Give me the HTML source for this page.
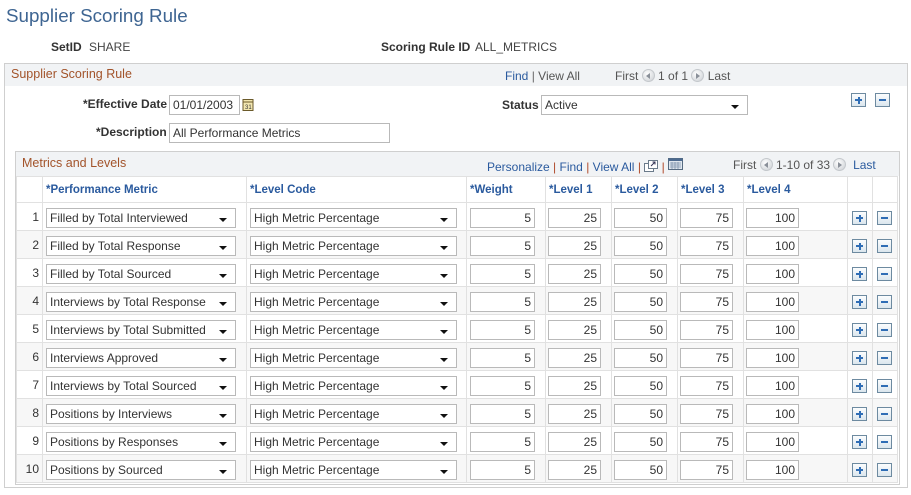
<!DOCTYPE html>
<html><head><meta charset="utf-8">
<style>
*{box-sizing:border-box;margin:0;padding:0}
body{width:911px;height:495px;background:#fff;font-family:"Liberation Sans",Arial,sans-serif;font-size:12px;color:#333;position:relative;overflow:hidden}
.a{position:absolute;white-space:nowrap}
.lbl{font-weight:bold;color:#333}
.val{color:#444}
.lnk{color:#2a5a9e}
.sep{color:#b04a2a}
.sec{color:#a2532a;font-size:12.5px}
.inp{position:absolute;height:20px;border:1px solid #b9b9b9;background:#fff;color:#333;padding:2px 3px 0 3px;font-size:12px;line-height:15px;white-space:nowrap;overflow:hidden}
.sel::after{content:"";position:absolute;right:8px;top:9px;border-left:4px solid transparent;border-right:4px solid transparent;border-top:4px solid #111}
.btn{position:absolute;width:15px;height:14px;border:1px solid #6d8aa0;background:linear-gradient(#fbfdfe,#dbe6ee)}
.btn.p::before{content:"";position:absolute;left:3px;top:5px;width:7px;height:2px;background:#2f6db5}
.btn.p::after{content:"";position:absolute;left:5.5px;top:2.5px;width:2px;height:7px;background:#2f6db5}
.btn.m::before{content:"";position:absolute;left:3px;top:5px;width:7px;height:2px;background:#2f6db5}
.circ{display:inline-block;width:13px;height:13px;border-radius:50%;background:radial-gradient(circle at 40% 35%,#fff,#c9cdd2);border:1px solid #c4c8cc;vertical-align:-2px;position:relative}
.circ.l::after{content:"";position:absolute;left:3px;top:3px;border-top:3px solid transparent;border-bottom:3px solid transparent;border-right:4px solid #8a9099}
.circ.r::after{content:"";position:absolute;left:4px;top:3px;border-top:3px solid transparent;border-bottom:3px solid transparent;border-left:4px solid #8a9099}
table{position:absolute;left:16px;top:176px;border-collapse:collapse;table-layout:fixed}
td{border:1px solid #e1e1e1;height:28px;position:relative;padding:0}
tr.h td{height:26px;color:#2a5a9e;font-weight:bold;font-size:11.5px;padding-left:3px;vertical-align:middle}
tr.g td{background:#f7f7f7}
td.n{text-align:right;padding-right:3px;color:#333;padding-top:1px}
td .inp{position:absolute;top:5px}
td .btn{top:8px !important}
.r{text-align:right}
</style></head><body>
<div class="a" style="left:6px;top:5px;font-size:18.8px;color:#3e6592">Supplier Scoring Rule</div>
<div class="a lbl" style="left:51px;top:40px">SetID</div>
<div class="a val" style="left:89px;top:40px">SHARE</div>
<div class="a lbl" style="left:381px;top:40px">Scoring Rule ID</div>
<div class="a val" style="left:475px;top:40px">ALL_METRICS</div>

<div class="a" style="left:4px;top:63px;width:904px;height:425px;border:1px solid #cfcfcf;background:#fff"></div>
<div class="a" style="left:5px;top:64px;width:902px;height:22px;background:#f1f3f5"></div>
<div class="a sec" style="left:11px;top:67px">Supplier Scoring Rule</div>
<div class="a" style="left:505px;top:69px"><span class="lnk">Find</span> <span style="color:#666">|</span> <span class="lnk" style="color:#555">View All</span></div>
<div class="a" style="left:615px;top:69px;color:#555">First <span class="circ l"></span> 1 of 1 <span class="circ r"></span> Last</div>

<div class="a lbl" style="left:83px;top:97px">*Effective Date</div>
<div class="inp" style="left:169px;top:95px;width:71px">01/01/2003</div>
<svg class="a" style="left:242px;top:98px" width="13" height="14" viewBox="0 0 13 14"><rect x="1" y="1.5" width="10" height="11" fill="#f3e7b0" stroke="#6b5a2a"/><line x1="1" y1="4" x2="11" y2="4" stroke="#6b5a2a"/><text x="3" y="11" font-size="6" font-family="Liberation Sans" fill="#333">31</text></svg>
<div class="a lbl" style="left:96px;top:125px">*Description</div>
<div class="inp" style="left:169px;top:123px;width:221px">All Performance Metrics</div>
<div class="a lbl" style="left:502px;top:98px">Status</div>
<div class="inp sel" style="left:541px;top:95px;width:207px">Active</div>
<div class="btn p" style="left:851px;top:93px"></div>
<div class="btn m" style="left:875px;top:93px"></div>

<div class="a" style="left:15px;top:151px;width:885px;height:334px;border:1px solid #cfcfcf"></div>
<div class="a" style="left:16px;top:152px;width:883px;height:24px;background:#f1f3f5"></div>
<div class="a sec" style="left:22px;top:156px">Metrics and Levels</div>
<div class="a" style="left:487px;top:158px"><span class="lnk">Personalize</span> <span class="sep">|</span> <span class="lnk">Find</span> <span class="sep">|</span> <span class="lnk">View All</span> <span class="sep">|</span> <svg width="14" height="12" style="vertical-align:-1px" viewBox="0 0 14 12"><rect x="0.5" y="3.5" width="9" height="8" fill="#fff" stroke="#6a7a8a"/><rect x="4.5" y="0.5" width="9" height="8" fill="#fff" stroke="#6a7a8a"/><path d="M7 6 L11 2 M8.5 2 H11 V4.5" stroke="#335" fill="none"/></svg> <span class="sep">|</span> <svg width="15" height="12" style="vertical-align:1px" viewBox="0 0 15 12"><rect x="0.5" y="0.5" width="14" height="11" fill="#dfe6ee" stroke="#556a80"/><rect x="0.5" y="0.5" width="14" height="2.5" fill="#4c6a8f"/><path d="M2 5h11M2 7h11M2 9h11M4 4v7M7 4v7M10 4v7" stroke="#7e94ad" stroke-width="0.8"/></svg></div>
<div class="a" style="left:733px;top:158px;color:#555">First <span class="circ l"></span> 1-10 of 33 <span class="circ r"></span> <span class="lnk">&nbsp;Last</span></div>

<table>
<colgroup><col style="width:26px"><col style="width:204px"><col style="width:220px"><col style="width:79px"><col style="width:66px"><col style="width:66px"><col style="width:66px"><col style="width:104px"><col style="width:25px"><col style="width:25px"></colgroup>
<tr class="h"><td></td><td>*Performance Metric</td><td>*Level Code</td><td>*Weight</td><td>*Level 1</td><td>*Level 2</td><td>*Level 3</td><td>*Level 4</td><td></td><td></td></tr>
<tr><td class="n">1</td><td><div class="inp sel" style="left:3px;width:190px">Filled by Total Interviewed</div></td><td><div class="inp sel" style="left:3px;width:207px">High Metric Percentage</div></td><td><div class="inp r" style="left:3px;width:65px">5</div></td><td><div class="inp r" style="left:2px;width:53px">25</div></td><td><div class="inp r" style="left:2px;width:53px">50</div></td><td><div class="inp r" style="left:2px;width:53px">75</div></td><td><div class="inp r" style="left:2px;width:53px">100</div></td><td><div class="btn p" style="left:4px"></div></td><td><div class="btn m" style="left:4px"></div></td></tr>
<tr class="g"><td class="n">2</td><td><div class="inp sel" style="left:3px;width:190px">Filled by Total Response</div></td><td><div class="inp sel" style="left:3px;width:207px">High Metric Percentage</div></td><td><div class="inp r" style="left:3px;width:65px">5</div></td><td><div class="inp r" style="left:2px;width:53px">25</div></td><td><div class="inp r" style="left:2px;width:53px">50</div></td><td><div class="inp r" style="left:2px;width:53px">75</div></td><td><div class="inp r" style="left:2px;width:53px">100</div></td><td><div class="btn p" style="left:4px"></div></td><td><div class="btn m" style="left:4px"></div></td></tr>
<tr><td class="n">3</td><td><div class="inp sel" style="left:3px;width:190px">Filled by Total Sourced</div></td><td><div class="inp sel" style="left:3px;width:207px">High Metric Percentage</div></td><td><div class="inp r" style="left:3px;width:65px">5</div></td><td><div class="inp r" style="left:2px;width:53px">25</div></td><td><div class="inp r" style="left:2px;width:53px">50</div></td><td><div class="inp r" style="left:2px;width:53px">75</div></td><td><div class="inp r" style="left:2px;width:53px">100</div></td><td><div class="btn p" style="left:4px"></div></td><td><div class="btn m" style="left:4px"></div></td></tr>
<tr class="g"><td class="n">4</td><td><div class="inp sel" style="left:3px;width:190px">Interviews by Total Response</div></td><td><div class="inp sel" style="left:3px;width:207px">High Metric Percentage</div></td><td><div class="inp r" style="left:3px;width:65px">5</div></td><td><div class="inp r" style="left:2px;width:53px">25</div></td><td><div class="inp r" style="left:2px;width:53px">50</div></td><td><div class="inp r" style="left:2px;width:53px">75</div></td><td><div class="inp r" style="left:2px;width:53px">100</div></td><td><div class="btn p" style="left:4px"></div></td><td><div class="btn m" style="left:4px"></div></td></tr>
<tr><td class="n">5</td><td><div class="inp sel" style="left:3px;width:190px">Interviews by Total Submitted</div></td><td><div class="inp sel" style="left:3px;width:207px">High Metric Percentage</div></td><td><div class="inp r" style="left:3px;width:65px">5</div></td><td><div class="inp r" style="left:2px;width:53px">25</div></td><td><div class="inp r" style="left:2px;width:53px">50</div></td><td><div class="inp r" style="left:2px;width:53px">75</div></td><td><div class="inp r" style="left:2px;width:53px">100</div></td><td><div class="btn p" style="left:4px"></div></td><td><div class="btn m" style="left:4px"></div></td></tr>
<tr class="g"><td class="n">6</td><td><div class="inp sel" style="left:3px;width:190px">Interviews Approved</div></td><td><div class="inp sel" style="left:3px;width:207px">High Metric Percentage</div></td><td><div class="inp r" style="left:3px;width:65px">5</div></td><td><div class="inp r" style="left:2px;width:53px">25</div></td><td><div class="inp r" style="left:2px;width:53px">50</div></td><td><div class="inp r" style="left:2px;width:53px">75</div></td><td><div class="inp r" style="left:2px;width:53px">100</div></td><td><div class="btn p" style="left:4px"></div></td><td><div class="btn m" style="left:4px"></div></td></tr>
<tr><td class="n">7</td><td><div class="inp sel" style="left:3px;width:190px">Interviews by Total Sourced</div></td><td><div class="inp sel" style="left:3px;width:207px">High Metric Percentage</div></td><td><div class="inp r" style="left:3px;width:65px">5</div></td><td><div class="inp r" style="left:2px;width:53px">25</div></td><td><div class="inp r" style="left:2px;width:53px">50</div></td><td><div class="inp r" style="left:2px;width:53px">75</div></td><td><div class="inp r" style="left:2px;width:53px">100</div></td><td><div class="btn p" style="left:4px"></div></td><td><div class="btn m" style="left:4px"></div></td></tr>
<tr class="g"><td class="n">8</td><td><div class="inp sel" style="left:3px;width:190px">Positions by Interviews</div></td><td><div class="inp sel" style="left:3px;width:207px">High Metric Percentage</div></td><td><div class="inp r" style="left:3px;width:65px">5</div></td><td><div class="inp r" style="left:2px;width:53px">25</div></td><td><div class="inp r" style="left:2px;width:53px">50</div></td><td><div class="inp r" style="left:2px;width:53px">75</div></td><td><div class="inp r" style="left:2px;width:53px">100</div></td><td><div class="btn p" style="left:4px"></div></td><td><div class="btn m" style="left:4px"></div></td></tr>
<tr><td class="n">9</td><td><div class="inp sel" style="left:3px;width:190px">Positions by Responses</div></td><td><div class="inp sel" style="left:3px;width:207px">High Metric Percentage</div></td><td><div class="inp r" style="left:3px;width:65px">5</div></td><td><div class="inp r" style="left:2px;width:53px">25</div></td><td><div class="inp r" style="left:2px;width:53px">50</div></td><td><div class="inp r" style="left:2px;width:53px">75</div></td><td><div class="inp r" style="left:2px;width:53px">100</div></td><td><div class="btn p" style="left:4px"></div></td><td><div class="btn m" style="left:4px"></div></td></tr>
<tr class="g"><td class="n">10</td><td><div class="inp sel" style="left:3px;width:190px">Positions by Sourced</div></td><td><div class="inp sel" style="left:3px;width:207px">High Metric Percentage</div></td><td><div class="inp r" style="left:3px;width:65px">5</div></td><td><div class="inp r" style="left:2px;width:53px">25</div></td><td><div class="inp r" style="left:2px;width:53px">50</div></td><td><div class="inp r" style="left:2px;width:53px">75</div></td><td><div class="inp r" style="left:2px;width:53px">100</div></td><td><div class="btn p" style="left:4px"></div></td><td><div class="btn m" style="left:4px"></div></td></tr>
</table>
</body></html>
